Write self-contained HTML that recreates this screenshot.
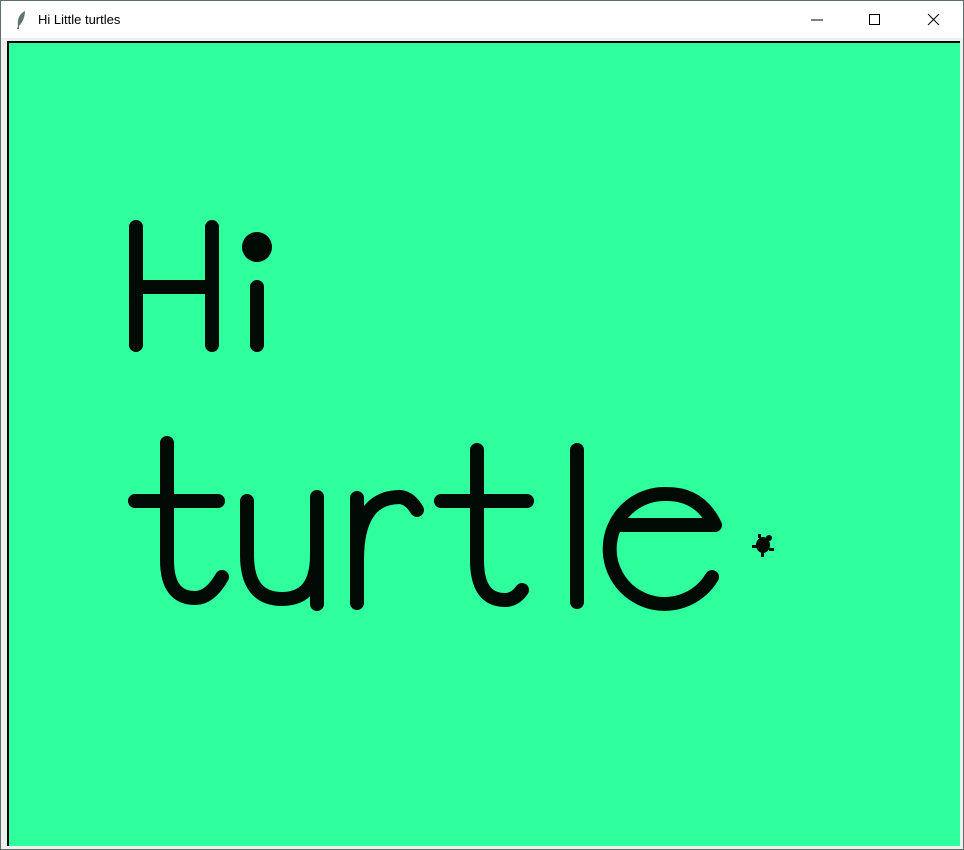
<!DOCTYPE html>
<html><head><style>
html,body{margin:0;padding:0;width:964px;height:850px;overflow:hidden;background:#f0f0f0;font-family:"Liberation Sans",sans-serif}
.win{position:absolute;left:0;top:0;width:962px;height:848px;border:1px solid #5f6f6a;background:#f0f0f0}
.title{position:absolute;left:0;top:0;width:962px;height:37px;background:#fff}
.title span{position:absolute;left:37px;top:11px;font-size:13px;color:#000}
.canvas{position:absolute;left:6px;top:40px;width:953px;height:805px;background:#30ff9e;border-top:2px solid #000;border-left:2px solid #000;box-sizing:border-box}
</style></head><body>
<div class="win">
<div class="title">
<svg style="position:absolute;left:14px;top:9px" width="12" height="20" viewBox="0 0 12 20"><path d="M10 1 C4 4 2 10 3 16 L2 19 L4 19 L4 16 C8 12 10 6 10 1Z" fill="#607570"/></svg>
<span>Hi Little turtles</span>
<svg style="position:absolute;left:800px;top:8px" width="150" height="22" viewBox="0 0 150 22">
<line x1="10" y1="11" x2="22" y2="11" stroke="#000" stroke-width="1"/>
<rect x="68.5" y="5.5" width="10" height="10" fill="none" stroke="#000"/>
<path d="M127 5 L138 16 M138 5 L127 16" stroke="#000" stroke-width="1"/>
</svg>
</div>
<div class="canvas"></div>
</div>
<svg style="position:absolute;left:0;top:0" width="964" height="850" viewBox="0 0 964 850">
<g fill="none" stroke="#020a05" stroke-width="14" stroke-linecap="round" stroke-linejoin="round">
<path d="M136 227 V345 M212 227 V345 M136 287 H212 M257 287 V345"/>
<path d="M167 443 V560 Q167 598 195 598 Q210 598 222 577 M135 501 H218"/>
<path d="M247 501 V555 Q247 599 282 599 Q317 599 317 555 M317 497 V604"/>
<path d="M357 498 V603 M357 560 Q357 497 400 497 Q410 498 417 510"/>
<path d="M477 450 V560 Q477 600 505 600 Q515 600 522 590 M441 501 H527"/>
<path d="M577 450 V602"/>
<path d="M616 525 H715 Q700 494 667 494 A55 55 0 1 0 712 577"/>
</g>
<circle cx="257" cy="247" r="15" fill="#020a05"/>
<g fill="#020a05" transform="translate(763,545)">
<ellipse cx="0" cy="0" rx="7" ry="8"/>
<circle cx="6" cy="-7" r="3"/>
<rect x="-2" y="6" width="3" height="6"/>
<rect x="-11" y="0" width="5" height="3"/>
<rect x="6" y="3" width="5" height="3"/>
<rect x="-5" y="-11" width="3" height="4"/>
</g>
</svg>
</body></html>
